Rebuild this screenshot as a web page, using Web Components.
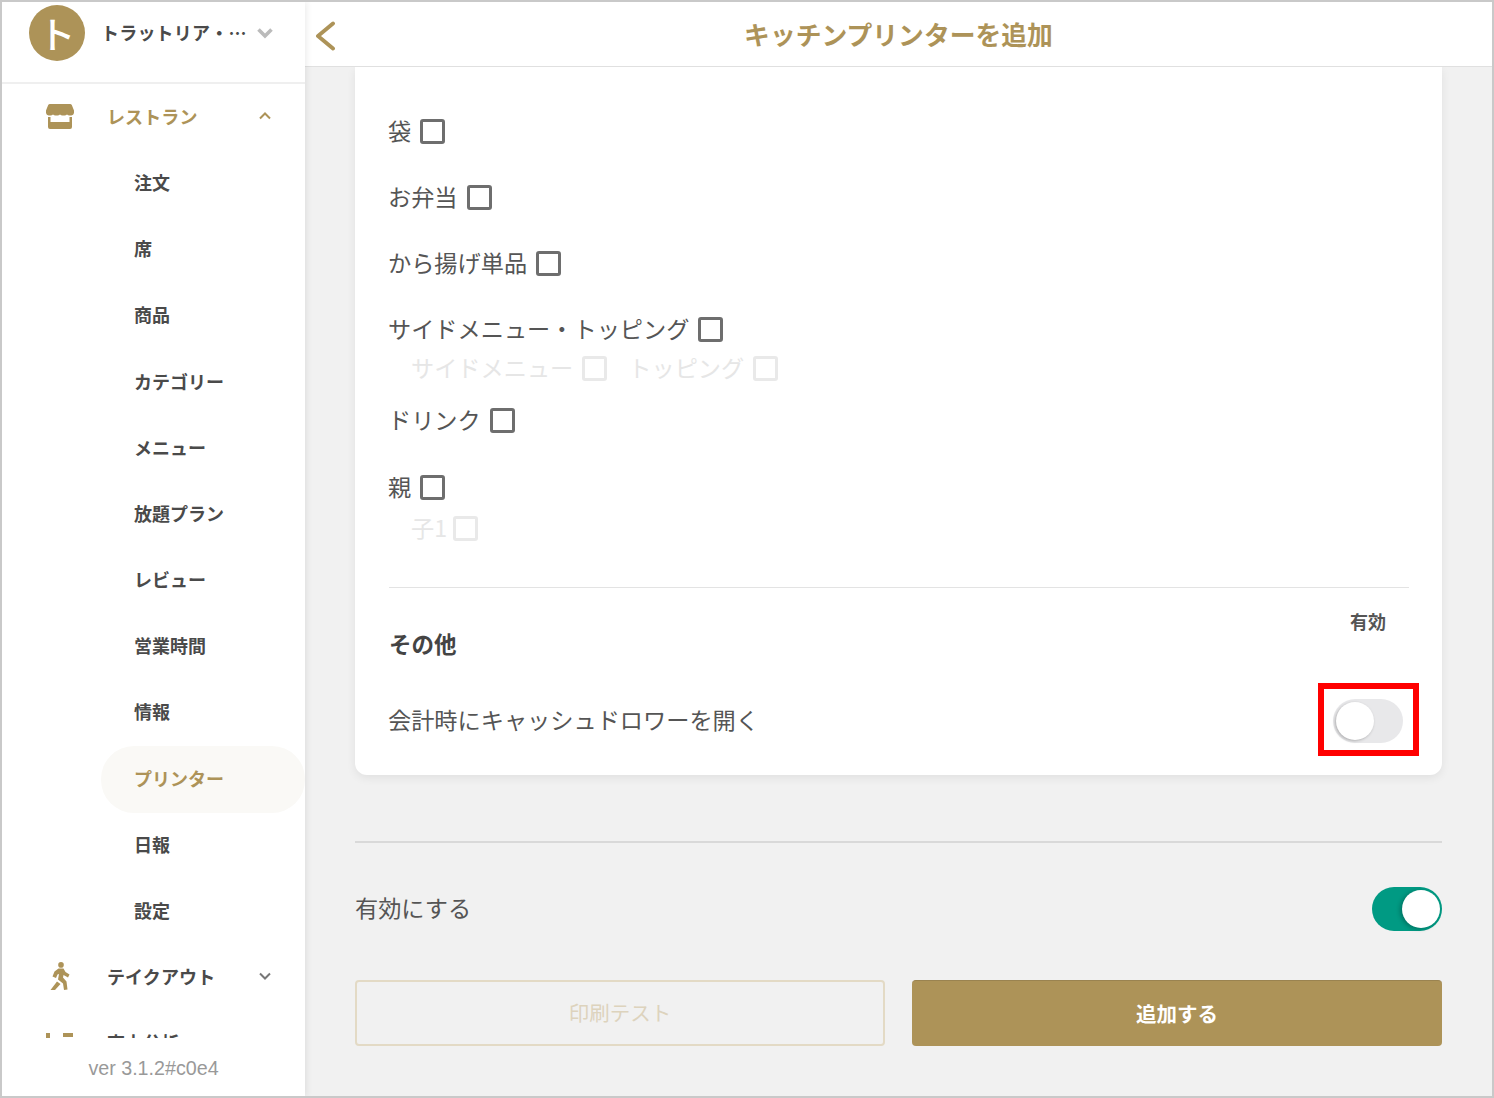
<!DOCTYPE html>
<html lang="ja">
<head>
<meta charset="utf-8">
<title>キッチンプリンターを追加</title>
<style>
  html, body { margin: 0; height: 100%; }
  body { font-family: "Noto Sans CJK JP", "Noto Sans", sans-serif; color: #444; background: #fff; overflow: hidden; }
</style>
</head>
<body>
<app-shell>
  <side-nav slot="side">
    <nav-group label="レストラン" icon="store" open active>
      <nav-link>注文</nav-link>
      <nav-link>席</nav-link>
      <nav-link>商品</nav-link>
      <nav-link>カテゴリー</nav-link>
      <nav-link>メニュー</nav-link>
      <nav-link>放題プラン</nav-link>
      <nav-link>レビュー</nav-link>
      <nav-link>営業時間</nav-link>
      <nav-link>情報</nav-link>
      <nav-link current>プリンター</nav-link>
      <nav-link>日報</nav-link>
      <nav-link>設定</nav-link>
    </nav-group>
    <nav-group label="テイクアウト" icon="walk"></nav-group>
    <nav-group label="売上分析" icon="chart"></nav-group>
  </side-nav>
  <top-bar slot="top">キッチンプリンターを追加</top-bar>
  <printer-form></printer-form>
</app-shell>

<script>
// gold used all over the app
const GOLD = '#ad9358';

class AppShell extends HTMLElement {
  constructor() {
    super();
    this.attachShadow({ mode: 'open' });
    this.shadowRoot.innerHTML = `
    <style>
      :host { display: flex; box-sizing: border-box; width: 1494px; height: 1098px; border: 2px solid #c9c9c9; background: #f1f1f1; overflow: hidden; }
      .side { flex: none; width: 303px; position: relative; z-index: 2; box-shadow: 2px 0 6px rgba(0,0,0,.07); }
      .main { flex: 1; min-width: 0; display: flex; flex-direction: column; }
    </style>
    <div class="side"><slot name="side"></slot></div>
    <div class="main"><slot name="top"></slot><slot></slot></div>`;
  }
}

class SideNav extends HTMLElement {
  constructor() {
    super();
    this.attachShadow({ mode: 'open' });
    this.shadowRoot.innerHTML = `
    <style>
      :host { display: flex; flex-direction: column; height: 100%; background: #fff; }
      .shop { flex: none; height: 77px; border-bottom: 2px solid #efefef; display: flex; align-items: flex-start; padding: 3px 0 0 27px; box-sizing: content-box; }
      .avatar { flex: none; width: 56px; height: 56px; border-radius: 50%; background: ${GOLD}; color: #fff; font-size: 37px; font-weight: 500; display: flex; align-items: center; justify-content: center; line-height: 1; }
      .name { margin: 13px 0 0 16px; width: 152px; font-size: 18px; font-weight: 700; line-height: 28px; color: #4a4a4a; white-space: nowrap; letter-spacing: .2px; }
      .chev { margin: 21px 0 0 3px; }
      .list { flex: 1; min-height: 0; overflow: hidden; padding-top: 0; margin-top: -1px; }
      .ver { flex: none; height: 58px; background: #fff; text-align: center; font-family: "Liberation Sans", Arial, sans-serif; font-size: 19.700px; color: #999; line-height: 60px; position: relative; }
    </style>
    <div class="shop">
      <div class="avatar">ト</div>
      <div class="name">トラットリア・…</div>
      <svg class="chev" width="18" height="14" viewBox="0 0 18 14"><path d="M2.500 3.500 9 10l6.500-6.500" fill="none" stroke="#bbb" stroke-width="3.600"/></svg>
    </div>
    <div class="list"><slot></slot></div>
    <div class="ver">ver 3.1.2#c0e4</div>`;
  }
}

const NAV_ICONS = {
  store: `<svg width="28" height="25" viewBox="0 0 28 25"><path d="M4 0H24a2 2 0 0 1 1.800 1.100L28 6.500V9a3 3 0 0 1-3.500 2.400 3.500 3.500 0 0 1-3.500-1 3.500 3.500 0 0 1-3.500 1 3.500 3.500 0 0 1-3.500-1 3.500 3.500 0 0 1-3.500 1 3.500 3.500 0 0 1-3.500-1 3.500 3.500 0 0 1-3.500 1A3 3 0 0 1 0 9V6.500L2.200 1.100A2 2 0 0 1 4 0Z" fill="${GOLD}"/><path d="M2 13H4.500V18H23.500V13H26V23a2 2 0 0 1-2 2H4a2 2 0 0 1-2-2Z" fill="${GOLD}"/></svg>`,
  walk: `<svg width="20" height="28" viewBox="0 0 20 28"><circle cx="11" cy="2.900" r="2.800" fill="${GOLD}"/><path d="M8.500 6.500 13.500 6.500 15.500 10 19.500 12.500 18 15.500 13.500 13 13 15.500 16.500 19.500 17.500 27.500 14 28 13 21.500 8 17.500 9 12 7.500 12.500 6 16 2.500 14.500 4.500 9.500ZM7 19.500 10.500 22 5 28 .5 28Z" fill="${GOLD}"/></svg>`,
  chart: `<svg width="28" height="25" viewBox="0 0 28 25"><rect x="0" y="3" width="4" height="22" fill="${GOLD}"/><rect x="17" y="3" width="10" height="4" fill="${GOLD}"/></svg>`
};

class NavGroup extends HTMLElement {
  constructor() {
    super();
    this.attachShadow({ mode: 'open' });
  }
  connectedCallback() {
    const open = this.hasAttribute('open');
    const active = this.hasAttribute('active');
    this.shadowRoot.innerHTML = `
    <style>
      :host { display: block; }
      .head { height: 66.150px; display: flex; align-items: center; padding-left: 44px; box-sizing: border-box; }
      .ico { flex: none; width: 28px; display: flex; justify-content: center; }
      .lab { flex: 1; margin-left: 33px; font-size: 18px; font-weight: 700; letter-spacing: .1px; color: ${active ? GOLD : '#4a4a4a'}; }
      .arr { flex: none; margin-right: 33px; }
    </style>
    <div class="head">
      <span class="ico">${NAV_ICONS[this.getAttribute('icon')]}</span>
      <span class="lab">${this.getAttribute('label')}</span>
      <svg class="arr" width="14" height="10" viewBox="0 0 14 10"><path d="${open ? 'M2 7.500 7 2.500l5 5' : 'M2 2.500 7 7.500l5-5'}" fill="none" stroke="${open ? GOLD : '#777'}" stroke-width="2"/></svg>
    </div>
    <slot></slot>`;
  }
}

class NavLink extends HTMLElement {
  constructor() {
    super();
    this.attachShadow({ mode: 'open' });
    this.shadowRoot.innerHTML = `
    <style>
      :host { display: flex; align-items: center; height: 66.150px; margin-left: 99px; padding-left: 33px; box-sizing: border-box; font-size: 18px; font-weight: 700; color: #4a4a4a; border-radius: 33px; }
      :host([current]) { background: #faf9f6; color: ${GOLD}; margin-top: 2px; margin-bottom: -2px; padding-bottom: 2px; }
    </style>
    <slot></slot>`;
  }
}

class TopBar extends HTMLElement {
  constructor() {
    super();
    this.attachShadow({ mode: 'open' });
    this.shadowRoot.innerHTML = `
    <style>
      :host { flex: none; display: flex; align-items: center; justify-content: center; position: relative; height: 63px; background: #fff; border-bottom: 1px solid #e0e0e0; font-size: 25.800px; font-weight: 700; color: ${GOLD}; z-index: 1; padding-bottom: 1px; box-sizing: content-box; }
      svg { position: absolute; left: 9px; top: 19px; }
      span { margin-top: -1px; }
    </style>
    <svg width="22" height="30" viewBox="0 0 22 30"><path d="M18 2.500 3 15 18 27.500" transform="translate(1 0)" fill="none" stroke="${GOLD}" stroke-width="3.900" stroke-linecap="round" stroke-linejoin="round"/></svg>
    <span><slot></slot></span>`;
  }
}

class CheckRow extends HTMLElement {
  constructor() {
    super();
    this.attachShadow({ mode: 'open' });
    this.shadowRoot.innerHTML = `
    <style>
      :host { display: inline-flex; align-items: center; height: 66px; font-size: 23.200px; color: #555; gap: 9px; }
      :host([sub]) { height: 40px; color: #e6e6e6; }
      .txt { margin: 0 0 2px -1px; }
      .box { flex: none; width: 25px; height: 25px; box-sizing: border-box; border: 3px solid #6e6e6e; border-radius: 3px; background: #fff; }
      :host([sub]) .box { border-color: #e9e9e9; }
    </style>
    <span class="txt"><slot></slot></span><span class="box"></span>`;
  }
}

class ToggleSwitch extends HTMLElement {
  constructor() {
    super();
    this.attachShadow({ mode: 'open' });
    this.shadowRoot.innerHTML = `
    <style>
      :host { flex: none; display: block; position: relative; width: 70px; height: 44px; box-sizing: border-box; border-radius: 22px; background: #e8e8ea; }
      :host([on]) { background: #009a83; }
      .knob { position: absolute; left: 3px; top: 3px; width: 38px; height: 38px; border-radius: 50%; background: #fff; box-shadow: -1px 1px 3px rgba(0,0,0,.25); }
      :host([on]) .knob { left: 30px; box-shadow: -2px 1px 4px rgba(0,0,0,.25); }
      .mark { display: none; position: absolute; left: -15px; top: -16px; width: 101px; height: 73px; box-sizing: border-box; border: 6px solid #f00; }
      :host([marked]) .mark { display: block; }
    </style>
    <span class="knob"></span><span class="mark"></span>`;
  }
}

class PrinterForm extends HTMLElement {
  constructor() {
    super();
    this.attachShadow({ mode: 'open' });
    this.shadowRoot.innerHTML = `
    <style>
      :host { flex: 1; min-height: 0; display: flex; flex-direction: column; padding: 0 50px; overflow: hidden; font-size: 23.200px; color: #555; }
      .card { flex: none; background: #fff; border-radius: 0 0 12px 12px; box-shadow: 0 3px 10px rgba(0,0,0,.07); padding: 31px 33px 0 34px; height: 708px; box-sizing: border-box; }
      .row { display: flex; }
      .sub { display: flex; padding-left: 23px; gap: 22px; }
      .s1 { margin: -14px 0 -1px; }
      .s2 { margin: -12px 0 0; }
      .gap { margin-top: 1px; }
      hr { border: 0; height: 1px; background: #e3e3e3; margin: 39px 0 0; }
      .oth { position: relative; display: flex; justify-content: space-between; }
      h3 { margin: 39px 0 0; font-size: 22.500px; line-height: 32px; font-weight: 700; color: #444; }
      .en { width: 70px; margin: 18px 6px 0 0; text-align: center; font-size: 18px; line-height: 30px; font-weight: 700; color: #555; }
      .opt { display: flex; justify-content: space-between; align-items: center; margin-top: 40px; height: 44px; padding-right: 6px; }
      .opt span, .enable span { margin-bottom: 4px; }
      .opt span { margin-left: -1px; }
      .rule { flex: none; height: 2px; background: #d9d9d9; margin-top: 66px; }
      .enable { flex: none; display: flex; justify-content: space-between; align-items: center; margin-top: 44px; height: 44px; }
      .btns { flex: none; display: flex; gap: 27px; margin-top: 49px; }
      .btn { flex: 1 1 530px; height: 66px; box-sizing: border-box; display: flex; align-items: center; justify-content: center; border-radius: 4px; font-size: 20.500px; padding-bottom: 2px; }
      .ghost { border: 2px solid #e3dac5; color: #ddd3bd; font-size: 20.500px; }
      .solid { background: ${GOLD}; color: #fff; font-weight: 700; border-top: 1px solid #9a8350; }
    </style>
    <section class="card">
      <div class="row"><check-row>袋</check-row></div>
      <div class="row"><check-row>お弁当</check-row></div>
      <div class="row"><check-row>から揚げ単品</check-row></div>
      <div class="row"><check-row>サイドメニュー・トッピング</check-row></div>
      <div class="sub s1"><check-row sub>サイドメニュー</check-row><check-row sub>トッピング</check-row></div>
      <div class="row"><check-row>ドリンク</check-row></div>
      <div class="row gap"><check-row>親</check-row></div>
      <div class="sub s2"><check-row sub style="gap:6px">子1</check-row></div>
      <hr>
      <div class="oth"><h3>その他</h3><div class="en">有効</div></div>
      <div class="opt"><span>会計時にキャッシュドロワーを開く</span><toggle-switch marked></toggle-switch></div>
    </section>
    <div class="rule"></div>
    <div class="enable"><span>有効にする</span><toggle-switch on></toggle-switch></div>
    <div class="btns"><div class="btn ghost">印刷テスト</div><div class="btn solid">追加する</div></div>`;
  }
}

customElements.define('app-shell', AppShell);
customElements.define('side-nav', SideNav);
customElements.define('nav-group', NavGroup);
customElements.define('nav-link', NavLink);
customElements.define('top-bar', TopBar);
customElements.define('check-row', CheckRow);
customElements.define('toggle-switch', ToggleSwitch);
customElements.define('printer-form', PrinterForm);
</script>
</body>
</html>
